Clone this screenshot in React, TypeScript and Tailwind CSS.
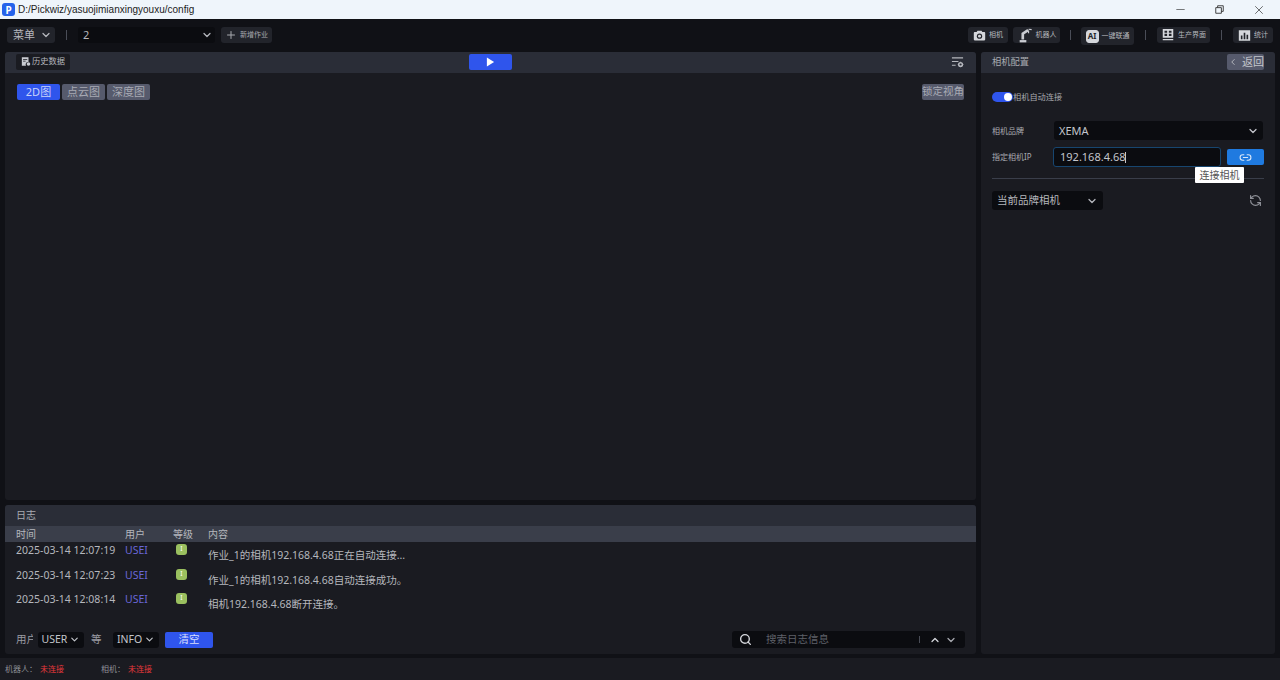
import { ChevronDown, ChevronLeft, ChevronUp, Link2, Plus, RefreshCcw, Search, X, Minus } from 'lucide-react';

const font = { fontFamily: '"Noto Sans", "Noto Sans CJK SC", sans-serif' };

const logs = [
  { time: '2025-03-14 12:07:19', text: '作业_1的相机192.168.4.68正在自动连接...' },
  { time: '2025-03-14 12:07:23', text: '作业_1的相机192.168.4.68自动连接成功。' },
  { time: '2025-03-14 12:08:14', text: '相机192.168.4.68断开连接。' },
];

function CameraIcon() {
  return (
    <svg viewBox="0 0 16 16" className="h-[13px] w-[13px]" fill="#d5d7dc">
      <path d="M5.5 2h5l1 1.800H14a1 1 0 0 1 1 1V13a1 1 0 0 1-1 1H2a1 1 0 0 1-1-1V4.800a1 1 0 0 1 1-1h2.500z" />
      <circle cx="8" cy="8.800" r="3.300" fill="#24262d" />
      <circle cx="8" cy="8.800" r="1.800" fill="#d5d7dc" />
    </svg>
  );
}

function RobotIcon() {
  return (
    <svg viewBox="0 0 18 18" className="h-[16px] w-[16px]" fill="none" stroke="#c9cbd1">
      <path d="M6.500 14V7.500L12.500 3.500" strokeWidth="3" />
      <path d="M13 2.500l3.500.5M13 4v3" strokeWidth="1.300" />
      <path d="M3 16h7.500" strokeWidth="2.600" />
    </svg>
  );
}

function AiIcon() {
  return (
    <span className="flex h-[13px] w-[13px] items-center justify-center rounded-[3px] border border-[#d5d7dc] bg-[#d5d7dc] text-[8px] font-bold leading-none text-[#24262d]">
      AI
    </span>
  );
}

function ScreenIcon() {
  return (
    <svg viewBox="0 0 16 16" className="h-[14px] w-[14px]" fill="#d5d7dc">
      <path d="M2 1h12v10H2zM4 3v2.500h3V3zm5 0v2.500h3V3zM4 6.500V9h3V6.500zm5 0V9h3V6.500zM2 12.500h12V14H2z" fillRule="evenodd" />
    </svg>
  );
}

function ChartIcon() {
  return (
    <svg viewBox="0 0 16 16" className="h-[13px] w-[13px]" fill="#d5d7dc">
      <path d="M1 1.500h14v13H1zM3.500 8v4.500h2V8zm3.500-3.500v8h2v-8zm3.500 2.500v5.500h2V7z" fillRule="evenodd" />
    </svg>
  );
}

function SettingsIcon() {
  return (
    <svg viewBox="0 0 14 12" className="h-[12px] w-[13px]" fill="none" stroke="#b5b7bd" strokeWidth="1.200">
      <path d="M1 1.500h12M1 5.500h7M1 9.500h4" />
      <circle cx="10.300" cy="8.700" r="2" strokeWidth="1.600" />
      <path d="M10.300 5.700v1M10.300 10.700v1M7.300 8.700h1M12.300 8.700h1" strokeWidth="1" />
    </svg>
  );
}

function ToolButton({ icon, label, className = '' }: { icon: React.ReactNode; label: string; className?: string }) {
  return (
    <div className={`flex h-[16px] items-center justify-center gap-[3px] rounded-[3px] bg-[#22242b] text-[7px] text-[#b5b7bd] ${className}`}>
      {icon}
      <span>{label}</span>
    </div>
  );
}

function Divider() {
  return <div className="h-[10px] w-px bg-[#4a4d57]" />;
}

function ViewTab({ label, active = false }: { label: string; active?: boolean }) {
  return (
    <div
      className={`flex h-[16px] w-[43px] items-center justify-center rounded-[2px] text-[11px] ${
        active ? 'bg-[#2f55ec] text-[#c8d2fb]' : 'bg-[#565a6c] text-[#a8aab4]'
      }`}
    >
      {label}
    </div>
  );
}

export default function App() {
  return (
    <div className="flex h-[680px] w-[1280px] flex-col overflow-hidden bg-[#101116]" style={font}>
      <div className="flex h-[19px] shrink-0 items-center bg-[#eff5fb] pl-[2px]">
        <div className="flex h-[13px] w-[13px] items-center justify-center rounded-[3px] bg-[#2563eb] text-[10px] font-bold leading-none text-white">
          P
        </div>
        <span className="ml-[3px] text-[10px] text-[#222]" style={{ fontFamily: '"Liberation Sans", sans-serif' }}>
          D:/Pickwiz/yasuojimianxingyouxu/config
        </span>
        <div className="ml-auto flex items-center text-[#333]">
          <Minus size={13} className="mr-[28px]" strokeWidth={1.200} />
          <svg viewBox="0 0 12 12" className="mr-[28px] h-[9px] w-[9px]" fill="none" stroke="#333" strokeWidth="1.200">
            <path d="M1 3.500h7.500V11H1zM3.500 3.500V1H11v7.500H8.500" />
          </svg>
          <X size={14} className="mr-[14px]" strokeWidth={1.200} />
        </div>
      </div>

      <div className="flex h-[28px] shrink-0 items-center px-[7px] pt-[4px]">
        <div className="flex h-[16px] w-[48px] items-center justify-between rounded-[3px] bg-[#22242b] pl-[6px] pr-[3px] text-[11px] text-[#b5b7bd]">
          菜单
          <ChevronDown size={12} strokeWidth={2.500} />
        </div>
        <div className="ml-[11px] h-[10px] w-px bg-[#4a4d57]" />
        <div className="ml-[11px] flex h-[16px] w-[137px] items-center justify-between rounded-[3px] bg-[#0b0c10] pl-[5px] pr-[2px] text-[11px] text-[#b5b7bd]">
          2
          <ChevronDown size={12} strokeWidth={2.500} />
        </div>
        <div className="ml-[6px] flex h-[16px] w-[51px] items-center justify-center gap-[3px] rounded-[3px] bg-[#22242b] text-[7px] text-[#a8aab0]">
          <Plus size={12} />
          新增作业
        </div>
        <div className="ml-auto flex items-center">
          <ToolButton icon={<CameraIcon />} label="相机" className="w-[40px]" />
          <ToolButton icon={<RobotIcon />} label="机器人" className="ml-[5px] w-[47px]" />
          <div className="mx-[10px]"><Divider /></div>
          <ToolButton icon={<AiIcon />} label="一键联通" className="mt-[2px] !h-[18px] w-[53px]" />
          <div className="mx-[11px]"><Divider /></div>
          <ToolButton icon={<ScreenIcon />} label="生产界面" className="w-[53px]" />
          <div className="mx-[11px]"><Divider /></div>
          <ToolButton icon={<ChartIcon />} label="统计" className="w-[40px]" />
        </div>
      </div>

      <div className="flex min-h-0 flex-1 gap-[5px] px-[5px] pt-[5px]">
        <div className="flex min-w-0 flex-1 flex-col gap-[5px]">
          <div className="flex min-h-0 flex-1 flex-col overflow-hidden rounded-[3px] bg-[#1a1b21]">
            <div className="flex h-[21px] shrink-0 items-center bg-[#2a2d37] pb-[2px] pl-[11px] pr-[12px]">
              <div className="flex-1">
                <div className="flex h-[16px] w-[54px] items-center justify-center gap-[1px] rounded-[2px] bg-[#1a1b21] text-[8.250px] text-[#b5b7bd]">
                  <svg viewBox="0 0 12 12" className="h-[11px] w-[10px]" fill="#c9cbd1">
                    <path d="M1 1h8v5.500A3 3 0 0 0 6 11H1zM2.500 3v1h5V3zm0 2v1h3V5z" fillRule="evenodd" />
                    <circle cx="9" cy="9" r="2.200" />
                  </svg>
                  历史数据
                </div>
              </div>
              <div className="flex h-[16px] w-[43px] items-center justify-center rounded-[2px] bg-[#2f55ec]">
                <svg viewBox="0 0 10 10" className="h-[10px] w-[9px]" fill="white">
                  <path d="M1 0l8 5-8 5z" />
                </svg>
              </div>
              <div className="flex flex-1 justify-end">
                <SettingsIcon />
              </div>
            </div>
            <div className="flex items-center justify-between px-[12px] pt-[11px]">
              <div className="flex gap-[2px]">
                <ViewTab label="2D图" active />
                <ViewTab label="点云图" />
                <ViewTab label="深度图" />
              </div>
              <div className="flex h-[16px] w-[42px] items-center justify-center rounded-[2px] bg-[#565a6c] text-[10.500px] text-[#a8aab4]">
                锁定视角
              </div>
            </div>
          </div>

          <div className="flex h-[149px] shrink-0 flex-col overflow-hidden rounded-[3px] bg-[#1a1b21]">
            <div className="flex h-[21px] shrink-0 items-center bg-[#2a2d37] pl-[11px] text-[10px] text-[#a8aab0]">日志</div>
            <div className="flex h-[16px] shrink-0 items-center bg-[#3a3e4a] text-[10px] text-[#b5b7bd]">
              <span className="ml-[11px] w-[109px]">时间</span>
              <span className="w-[48px]">用户</span>
              <span className="w-[35px]">等级</span>
              <span>内容</span>
            </div>
            <div className="flex-1">
              {logs.map((log) => (
                <div key={log.time} className="flex h-[24.500px] text-[#b5b7bd]">
                  <span className="ml-[11px] mt-[1px] w-[109px] text-[10.500px]">{log.time}</span>
                  <span className="mt-[1px] w-[51px] text-[10.500px] text-[#6a67d8]">USEI</span>
                  <div className="mr-[21px] mt-[2px] flex h-[11px] w-[11px] items-center justify-center rounded-[3px] bg-[#9ac05f] text-[7px] text-white">
                    I
                  </div>
                  <span className="mt-[6px] text-[10.500px]">{log.text}</span>
                </div>
              ))}
            </div>
            <div className="flex h-[31px] shrink-0 items-center px-[11px] pt-[2px] text-[10.500px] text-[#9a9ca3]">
              <span className="w-[17px] overflow-hidden whitespace-nowrap">用户</span>
              <div className="ml-[5px] flex h-[16px] w-[46px] items-center justify-center gap-[2px] rounded-[3px] bg-[#0b0c10] text-[#c3c5cb]">
                USER
                <ChevronDown size={11} strokeWidth={2.500} />
              </div>
              <span className="ml-[7px] w-[16px] overflow-hidden whitespace-nowrap">等</span>
              <div className="ml-[6px] flex h-[16px] w-[46px] items-center justify-center gap-[2px] rounded-[3px] bg-[#0b0c10] text-[#c3c5cb]">
                INFO
                <ChevronDown size={11} strokeWidth={2.500} />
              </div>
              <div className="ml-[6px] flex h-[16px] w-[48px] items-center justify-center rounded-[2px] bg-[#2f55ec] text-[#d8defc]">清空</div>
              <div className="ml-auto flex h-[17px] w-[233px] items-center rounded-[3px] bg-[#0b0c10] pl-[7px] pr-[8px] text-[#5e6068]">
                <Search size={13} strokeWidth={2.500} className="text-[#d5d7dc]" />
                <span className="ml-[14px]">搜索日志信息</span>
                <div className="ml-auto h-[7px] w-px bg-[#4a4d57]" />
                <ChevronUp size={12} strokeWidth={2.500} className="ml-[9px] text-[#d5d7dc]" />
                <ChevronDown size={12} strokeWidth={2.500} className="ml-[4px] text-[#a8aab0]" />
              </div>
            </div>
          </div>
        </div>

        <div className="flex w-[294px] shrink-0 flex-col overflow-hidden rounded-[3px] bg-[#1a1b21]">
          <div className="flex h-[21px] shrink-0 items-center justify-between bg-[#2a2d37] pb-[1px] px-[11px] text-[9.250px] text-[#a8aab0]">
            相机配置
            <div className="flex h-[16px] w-[37px] items-center gap-[4px] rounded-[2px] bg-[#565a6c] pl-[1px] text-[11px] text-[#c3c5cb]">
              <ChevronLeft size={10} />
              返回
            </div>
          </div>
          <div className="flex flex-col px-[11px]">
            <div className="mt-[18px] flex items-center text-[8.200px] text-[#a8aab0]">
              <div className="flex h-[10px] w-[21px] items-center justify-end rounded-full bg-[#2f55ec] pr-[1px]">
                <div className="h-[8px] w-[8px] rounded-full bg-white" />
              </div>
              相机自动连接
            </div>
            <div className="mt-[18px] flex items-center text-[8px] text-[#a8aab0]">
              <span className="w-[62px]">相机品牌</span>
              <div className="flex h-[19px] w-[209px] items-center justify-between rounded-[3px] bg-[#0b0c10] pl-[5px] pr-[4px] text-[11px] text-[#c3c5cb]">
                XEMA
                <ChevronDown size={12} strokeWidth={2.500} />
              </div>
            </div>
            <div className="relative mt-[7px] flex items-center text-[8px] text-[#a8aab0]">
              <span className="w-[61px]">指定相机IP</span>
              <div className="flex h-[20px] w-[168px] items-center rounded-[3px] border border-[#17466f] bg-[#0b0c10] pl-[6px] text-[11px] text-[#c3c5cb]">
                192.168.4.68
                <span className="h-[11px] w-px bg-[#c3c5cb]" />
              </div>
              <div className="ml-[6px] flex h-[16px] w-[37px] items-center justify-center rounded-[2px] bg-[#1f7ae0]">
                <Link2 size={13} className="text-[#d8e6f8]" />
              </div>
              <div className="absolute left-[203px] top-[20px] flex h-[16px] w-[49px] items-center justify-center rounded-[1px] bg-white text-[10px] text-[#555]">
                连接相机
              </div>
            </div>
            <div className="mt-[11px] h-px w-full bg-[#3a3e4a]" />
            <div className="mt-[12px] flex items-center justify-between">
              <div className="flex h-[19px] w-[111px] items-center justify-between rounded-[3px] bg-[#0b0c10] pl-[5px] pr-[5px] text-[10.500px] text-[#b5b7bd]">
                当前品牌相机
                <ChevronDown size={12} strokeWidth={2.500} />
              </div>
              <RefreshCcw size={13} strokeWidth={2.200} className="mr-[2px] text-[#8e9097]" />
            </div>
          </div>
        </div>
      </div>

      <div className="mt-[4px] flex h-[22px] shrink-0 items-center bg-[#1a1b21] pl-[5px] text-[8px] text-[#8e9097]">
        <span>机器人：</span>
        <span className="ml-[3px] text-[#e5383b]">未连接</span>
        <span className="ml-[37px]">相机：</span>
        <span className="ml-[3px] text-[#e5383b]">未连接</span>
      </div>
    </div>
  );
}
